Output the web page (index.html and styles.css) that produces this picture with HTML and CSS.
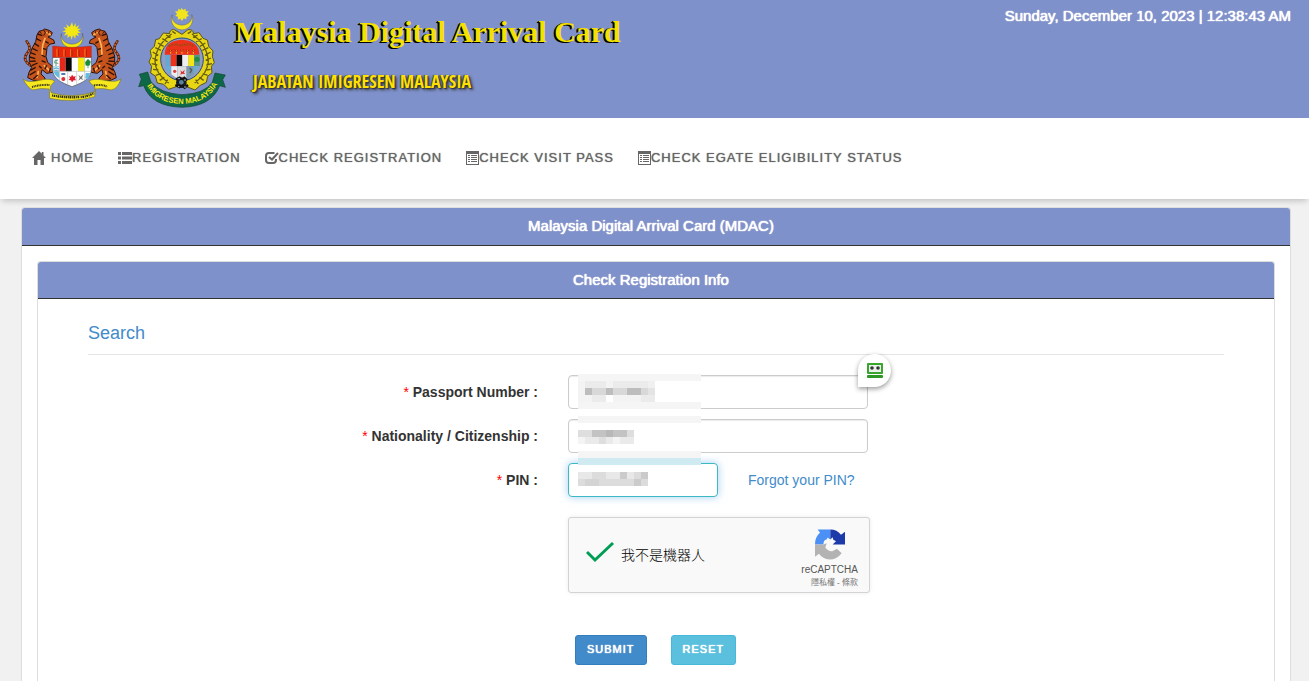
FILE: index.html
```html
<!DOCTYPE html>
<html lang="en">
<head>
<meta charset="utf-8">
<title>Malaysia Digital Arrival Card</title>
<link rel="stylesheet" href="styles.css">
</head>
<body>
<header class="banner">
  <svg class="crest" viewBox="0 0 345 354" aria-hidden="true">
    <defs>
      <g id="tiger">
        <path d="M47 197C32 188 24 174 36 160C47 150 46 137 35 124" fill="none" stroke="#5b2410" stroke-width="8" stroke-linecap="round"/>
        <path d="M47 197C32 188 24 174 36 160C47 150 46 137 35 124" fill="none" stroke="#d8672b" stroke-width="4" stroke-dasharray="6 4"/>
        <path d="M72 94L83 91L89 87L102 91L112 98L108 107L99 111L116 120L119 130L105 132L96 143L93 170L98 187L116 203L113 217L95 220L81 209L78 222L90 234L88 242L55 241L38 233L42 217L50 202L43 188L43 168L51 145L62 125L66 105Z" fill="#c6531b" stroke="#2d1208" stroke-width="3"/>
        <path d="M90 115L83 136L81 166M96 98L106 104M88 197L103 211M70 215L66 232" fill="none" stroke="#ffb45a" stroke-width="5" stroke-linecap="round"/>
        <path d="M68 102L82 107M64 116L78 123M58 130L72 139M52 145L68 153M46 158L62 164M44 171L61 176M45 184L62 183M50 197L68 189M46 211L62 202M44 225L62 214M55 237L68 225M91 124L101 130M84 146L93 148M79 165L91 171M80 182L92 187M72 198L80 205M95 196L90 208M107 203L103 215" fill="none" stroke="#2a110a" stroke-width="4"/>
        <path d="M72 94L80 101M86 90L91 98L86 107M101 94L99 101" fill="none" stroke="#3a160b" stroke-width="3"/>
      </g>
    </defs>
    <path d="M140 100A33 33 0 1 0 202 100A32 26 0 1 1 140 100Z" fill="#f4e813" stroke="#3c3d2f" stroke-width="1"/>
    <path d="M171 67L175 80L182 69L182 82L193 75L187 86L199 86L188 92L198 98L187 99L192 109L182 104L181 116L174 106L170 119L166 107L157 114L158 103L147 107L153 97L142 95L153 90L145 81L157 84L154 73L164 81Z" fill="#f4e813"/>
    <use href="#tiger"/><use href="#tiger" transform="translate(342 0) scale(-1 1)"/>
    <path d="M113 172H229V208C228 237 203 248 171 260C139 248 114 237 113 208Z" fill="#fff" stroke="#555" stroke-width="2"/>
    <path d="M113 138Q171 146 229 138V172H113Z" fill="#e8270d" stroke="#8f2210"/>
    <path d="M126 146V170M147 148V170M167 148V170M188 148V170M210 146V170" stroke="#ffb923" stroke-width="2"/>
    <path d="M130 148V168M151 150V168M171 150V168M192 150V168M214 148V168" stroke="#8e1e0c" stroke-width="2"/>
    <path d="M134 173H152V214H134Z" fill="#e8271b"/><path d="M152 173H170V214H152Z" fill="#080808"/><path d="M189 173H209V214H189Z" fill="#f5e913"/>
    <path d="M115 199H133V234Q118 228 115 211Z" fill="#65bddd"/><path d="M116 202Q124 198 132 203M116 210Q124 206 132 210" fill="none" stroke="#eaf8ff" stroke-width="3"/>
    <path d="M123 178V199M117 184L129 180M117 188L130 190" stroke="#5d9b82" stroke-width="3"/>
    <path d="M219 178L226 185L223 196H213L211 187ZM219 190V205" fill="#168c3a" stroke="#168c3a" stroke-width="2"/>
    <path d="M113 214H229M134 214V241M158 214V254M185 214V254M209 173V241" stroke="#bbb" stroke-width="2"/>
    <path d="M162 228L168 231L171 224L176 230L182 228L180 235L183 241L176 241L171 247L168 241L161 240L165 235Z" fill="#e0192a"/>
    <circle cx="145" cy="237" r="6" fill="#dc2e3a"/><path d="M139 222H151" stroke="#345aaa" stroke-width="5"/>
    <path d="M190 224L197 230L205 223L201 235L206 240L197 237L190 242L194 233Z" fill="#777"/><path d="M212 219H225L219 238L211 235Z" fill="#65bddd"/>
    <path d="M24 237Q38 250 73 241Q108 233 119 244L111 253Q103 258 108 278Q141 288 171 287Q208 286 240 275Q243 259 230 253L222 243Q237 234 269 241Q305 249 318 236Q309 267 288 270Q261 263 241 267L239 290Q169 310 104 295L103 267Q77 263 54 270Q38 264 24 237Z" fill="#f6e81d" stroke="#817b24" stroke-width="2"/>
    <path d="M51 261Q78 253 104 255M237 256Q258 252 277 260" fill="none" stroke="#34331c" stroke-width="6" stroke-dasharray="3 2"/>
    <path d="M111 286Q150 294 193 291M197 291Q221 289 237 279" fill="none" stroke="#292a1c" stroke-width="7" stroke-dasharray="3 2 5 2"/>
  </svg>
  <svg class="badge" viewBox="0 0 315 354" aria-label="Imigresen Malaysia">
    <path d="M127 44A32 32 0 1 0 185 44A30 25 0 1 1 127 44Z" fill="#f3e51d" stroke="#4b4b35"/>
    <path d="M155 23L159 30L167 26L167 34L176 34L171 41L177 48L169 50L169 58L161 55L156 63L151 56L143 59L144 50L136 48L141 42L135 34L144 34L145 26L152 30Z" fill="#f3e51d"/>
    <path d="M131 88Q118 90 119 101L100 99L88 116L77 119L73 139L61 151L64 169L57 186L65 199L62 219L76 228L82 249L101 253L116 268L139 260H170L195 270L211 256L229 247L233 229L246 218L244 199L253 188L247 169L249 153L236 139L232 120L219 115L207 98L190 101Q191 88 174 89L156 103Z" fill="#e8d615" stroke="#5c5615" stroke-width="3"/>
    <path d="M127 94L137 101M108 105L122 112M97 116L113 126M84 129L101 139M76 143L93 151M68 156L85 166M67 174L83 181M65 191L82 195M69 208L85 210M77 226L93 221M89 241L103 232M105 252L113 239M184 94L173 101M203 105L189 112M215 116L198 126M226 129L210 139M235 143L217 151M242 156L225 166M243 174L227 181M246 191L229 195M242 208L226 210M233 226L218 221M221 241L208 232M205 252L197 239M125 102Q78 135 75 184Q76 221 116 249M186 102Q232 135 235 184Q233 221 194 249" fill="none" stroke="#675d10" stroke-width="4"/>
    <circle cx="156" cy="178" r="64" fill="#8f9cc4" stroke="#294783" stroke-width="3"/>
    <path d="M104 164Q104 121 156 119Q207 122 208 164Z" fill="#ed321b"/>
    <path d="M116 139Q134 129 152 138Q171 128 193 139" fill="none" stroke="#a74714" stroke-width="7" stroke-dasharray="5 3"/>
    <path d="M122 150V161M139 150V161M156 150V161M173 150V161M190 150V161" stroke="#ffc425" stroke-width="3"/>
    <path d="M118 149L122 155L126 149M135 149L139 155L143 149M152 149L156 155L160 149M169 149L173 155L177 149M186 149L190 155L194 149" fill="none" stroke="#72230e" stroke-width="2"/>
    <path d="M105 165H122V198H107Z" fill="#64a8d1"/><path d="M122 165H140V198H122Z" fill="#ed321b"/><path d="M140 165H157V198H140Z" fill="#090909"/><path d="M157 165H175V198H157Z" fill="#eee"/><path d="M175 165H192V198H175Z" fill="#f5e512"/><path d="M192 165H210V198H192Z" fill="#579784"/>
    <circle cx="201" cy="178" r="8" fill="#248b47"/>
    <path d="M107 199H123V223Q110 214 107 199Z" fill="#65aed8"/><path d="M124 199H141V235L124 223Z" fill="#eee"/><path d="M142 199H169V240H142Z" fill="#ddd"/><path d="M170 199H191V223L170 237Z" fill="#779aae"/><path d="M191 199H205Q201 212 191 221Z" fill="#64afd1"/>
    <path d="M151 211L157 216L164 209L162 218L166 222L157 221L151 224L153 217Z" fill="#d92e32"/><circle cx="134" cy="214" r="5" fill="#d84343"/><path d="M179 204L185 210L180 219" stroke="#555" stroke-width="4" fill="none"/>
    <circle cx="154" cy="248" r="16" fill="#161d25"/><path d="M138 238L149 233L155 239L163 233L171 241M136 255L148 261L154 253L164 263L174 255" fill="none" stroke="#111" stroke-width="7"/><circle cx="154" cy="247" r="7" fill="#5b819b"/><path d="M143 236H150M162 240H168M144 260H148M162 261H169" stroke="#a4b7c0" stroke-width="3"/>
    <path d="M53 216L28 223L34 237L26 260L41 257Q64 319 156 322Q245 319 269 257L286 262L278 239L286 225L255 219L247 247Q222 282 156 284Q90 281 62 244Z" fill="#0d6848" stroke="#174231" stroke-width="2"/>
    <path id="ribbon" d="M44 241Q70 309 156 312Q243 309 269 236" fill="none"/>
    <text class="ribbon-text"><textPath href="#ribbon" startOffset="50%" text-anchor="middle">IMIGRESEN MALAYSIA</textPath></text>
  </svg>
  <div class="titles">
    <h1 class="title">Malaysia Digital Arrival Card</h1>
    <p class="subtitle">JABATAN IMIGRESEN MALAYSIA</p>
  </div>
  <time class="clock">Sunday, December 10, 2023 | 12:38:43 AM</time>
</header>
<nav class="menu">
  <a href="#" class="home"><svg class="icon" viewBox="0 0 14 14"><path d="M7 0L0 7H2V14H5.500V9H8.500V14H12V7H14L11.500 4.500V1H9.800V2.800Z"/></svg>HOME</a>
  <a href="#"><svg class="icon" viewBox="0 0 14 14"><path d="M0 1H3V4H0ZM4 1H14V4H4ZM0 5.500H3V8.500H0ZM4 5.500H14V8.500H4ZM0 10H3V13H0ZM4 10H14V13H4Z"/></svg>REGISTRATION</a>
  <a href="#"><svg class="icon" viewBox="0 0 14 14"><path d="M9.500 2H4Q1 2 1 5V9Q1 12 4 12H8Q11 12 11 9V8" fill="none" stroke="#666" stroke-width="2"/><path d="M4 6L7 8.500L13 2" fill="none" stroke="#666" stroke-width="2"/></svg>CHECK REGISTRATION</a>
  <a href="#"><svg class="icon sheet" viewBox="0 0 13 14"><path fill-rule="evenodd" d="M0 0H13V14H0ZM1 3V13H12V3ZM2 4H4V5H2ZM5 4H11V5H5ZM2 6H4V7H2ZM5 6H11V7H5ZM2 8H4V9H2ZM5 8H11V9H5ZM2 10H4V11H2ZM5 10H11V11H5Z"/></svg>CHECK VISIT PASS</a>
  <a href="#"><svg class="icon sheet" viewBox="0 0 13 14"><path fill-rule="evenodd" d="M0 0H13V14H0ZM1 3V13H12V3ZM2 4H4V5H2ZM5 4H11V5H5ZM2 6H4V7H2ZM5 6H11V7H5ZM2 8H4V9H2ZM5 8H11V9H5ZM2 10H4V11H2ZM5 10H11V11H5Z"/></svg>CHECK EGATE ELIGIBILITY STATUS</a>
</nav>
<main class="panel outer">
  <h2 class="panel-heading main-heading">Malaysia Digital Arrival Card (MDAC)</h2>
  <section class="panel inner">
    <h2 class="panel-heading">Check Registration Info</h2>
    <h3 class="legend">Search</h3>
    <form class="form">
      <label class="label" for="passport"><span class="star">*</span> Passport Number :</label>
      <div class="field first">
        <input class="input" id="passport" type="text">
        <button class="filler" type="button" aria-label="Fill form"><svg viewBox="0 0 16 16" width="16" height="16"><rect width="16" height="11" rx="1" fill="#38a52c"/><rect x="2" y="2" width="12" height="7" fill="#eaf0ea"/><circle cx="5" cy="5" r="1.800" fill="#333"/><circle cx="11" cy="5" r="1.800" fill="#333"/><rect y="12" width="16" height="3" rx="1" fill="#2c9824"/></svg></button>
        <svg class="mosaic" viewBox="0 0 123 112" shape-rendering="crispEdges" aria-hidden="true">
          <path fill="#f5f5f5" d="M0 0H123V7H0ZM0 28H123V35H0ZM0 42H123V49H0ZM0 77H123V84H0Z"/><path fill="#cfeaf0" d="M0 84H123V91H0Z"/>
          <path fill="#f3f3f3" d="M0 7h7v14h-7zM28 7h7v7h-7zM0 21h14v7h-14zM35 21h28v7h-28z"/>
          <path fill="#ebebeb" d="M7 7h21v7h-21zM35 7h35v7h-35zM14 21h14v7h-14zM63 21h14v7h-14z"/><path fill="#f0f0f0" d="M70 7h7v7h-7z"/>
          <path fill="#bdbdbd" d="M7 14h7v7h-7zM28 14h7v7h-7zM49 14h14v7h-14z"/><path fill="#d8d8d8" d="M14 14h14v7h-14zM35 14h14v7h-14zM63 14h7v7h-7z"/><path fill="#e4e4e4" d="M70 14h7v7h-7z"/>
          <path fill="#dedede" d="M0 56h14v7h-14zM49 56h7v7h-7zM21 63h7v7h-7z"/><path fill="#c3c3c3" d="M14 56h35v7h-35z"/><path fill="#b8b8b8" d="M28 56h7v7h-7z"/><path fill="#f4f4f4" d="M0 63h7v7h-7zM35 63h7v7h-7z"/><path fill="#eaeaea" d="M7 63h14v7h-14zM28 63h7v7h-7zM42 63h14v7h-14z"/>
          <path fill="#e8e8e8" d="M0 98h14v7h-14zM28 98h14v7h-14zM49 98h7v7h-7z"/><path fill="#dcdcdc" d="M14 98h14v7h-14zM56 98h7v7h-7zM0 105h7v7h-7zM21 105h35v7h-35zM63 105h7v7h-7z"/><path fill="#cbcbcb" d="M42 98h7v7h-7zM63 98h7v7h-7zM56 105h7v7h-7z"/><path fill="#d4d4d4" d="M7 105h14v7h-14z"/>
        </svg>
      </div>
      <label class="label" for="nation"><span class="star">*</span> Nationality / Citizenship :</label>
      <div class="field"><input class="input" id="nation" type="text"></div>
      <label class="label" for="pin"><span class="star">*</span> PIN :</label>
      <div class="field pin-row"><input class="input pin" id="pin" type="text"><a href="#" class="forgot">Forgot your PIN?</a></div>
      <div class="field actions">
        <div class="captcha">
          <svg class="tick" viewBox="0 0 28 22"><path d="M1 11L9 19L27 2" fill="none" stroke="#009e55" stroke-width="3"/></svg>
          <span class="robot">我不是機器人</span>
          <div class="brand">
            <svg class="recaptcha" viewBox="0 0 90 92">
              <path d="M0 46C0 31 5 19 15 11L8 1H46V31L38 25L35 31Q26 31 25 46Z" fill="#4a90f5"/>
              <path d="M46 1Q66 1 78 17L90 8V46H53L63 36L55 32L53 24L46 31Z" fill="#1c3aa9"/>
              <path d="M0 46H25L35 42L31 55Q39 67 52 66L66 59L80 72Q65 91 44 91Q23 90 12 74L0 83Z" fill="#b3b3b3"/>
            </svg>
            <span class="brand-name">reCAPTCHA</span>
            <span class="terms"><a href="#">隱私權</a> - <a href="#">條款</a></span>
          </div>
        </div>
        <div class="buttons"><button class="btn submit" type="submit">SUBMIT</button><button class="btn reset" type="reset">RESET</button></div>
      </div>
    </form>
  </section>
</main>
</body>
</html>
```
FILE: styles.css
```css
* { box-sizing: border-box; }
body {
  margin: 0;
  min-height: 100vh;
  display: flex;
  flex-direction: column;
  background: #f1f1f1;
  font: 14px/20px "Liberation Sans", Arial, "Noto Sans CJK TC", sans-serif;
  color: #333;
}
a { color: #428bca; text-decoration: none; }
h1, h2, h3, p { margin: 0; }
.banner {
  display: flex;
  align-items: flex-start;
  min-height: 118px;
  padding: 0 18px 0 15px;
  background: #7f91ca;
}
.crest { width: 115px; height: 118px; flex: none; }
.badge { width: 105px; height: 118px; flex: none; }
.ribbon-text { font: bold 23px "Liberation Sans Narrow", "Liberation Sans", sans-serif; fill: #f7e90d; }
.titles { padding: 12px 0 0; }
.title {
  font: bold 30px/40px "Liberation Serif", serif;
  color: #f5e000;
  text-shadow: -1px 0 #000, -2px 1px #000;
}
.subtitle {
  padding: 16px 0 0 18px;
  font: bold 18px/26px "Open Sans Condensed", "Roboto Condensed", "Liberation Sans Narrow", "Liberation Sans", sans-serif;
  color: #ffe000;
  text-shadow: 1px 1px 1px #333, 2px 2px 3px #333, -1px 0 1px #444;
}
.clock {
  margin-left: auto;
  padding-top: 6px;
  font-size: 15px;
  color: #fff;
  text-shadow: 0 0 1px #fff, 0 0 1px #fff;
}
.menu {
  display: flex;
  flex-wrap: wrap;
  align-items: center;
  gap: 24px;
  min-height: 81px;
  padding: 0 32px 2px;
  background: #fff;
  box-shadow: 0 4px 6px -2px rgba(0, 0, 0, .2);
}
.menu a {
  display: flex;
  align-items: center;
  font-size: 13px;
  letter-spacing: 1px;
  color: #666;
  text-shadow: 0 0 1px #666;
}
.icon { width: 14px; height: 14px; fill: #666; }
.sheet { width: 13px; }
.menu .home { gap: 5px; }
.panel { border: 1px solid #ddd; border-bottom: 0; border-radius: 4px 4px 0 0; background: #fff; }
.outer { display: flex; flex-direction: column; flex: 1; margin: 8px 18px 0 21px; }
.inner { flex: 1; margin: 15px 15px 0; }
.panel-heading {
  padding: 8px 10px 8px 0;
  border-bottom: 1px solid #333;
  border-radius: 3px 3px 0 0;
  background: #7f91ca;
  color: #fff;
  font-size: 15px;
  font-weight: normal;
  line-height: 20px;
  text-align: center;
  text-shadow: 0 0 1px #fff, 0 0 1px #fff;
}
.main-heading { padding-bottom: 9px; }
.legend {
  margin: 0 50px 20px;
  padding: 22px 0 9px;
  border-bottom: 1px solid #e5e5e5;
  font-size: 18px;
  font-weight: normal;
  line-height: 24px;
  color: #428bca;
}
.form { display: grid; grid-template-columns: 5fr 7fr; row-gap: 10px; }
.label { padding: 7px 15px 7px 0; text-align: right; font-weight: bold; }
.star { color: red; font-weight: normal; }
.field { padding-left: 15px; }
.first { position: relative; }
.input {
  display: block;
  width: 300px;
  height: 34px;
  padding: 6px 12px;
  border: 1px solid #ccc;
  border-radius: 4px;
  background: #fff;
  font: inherit;
  box-shadow: inset 0 1px 1px rgba(0, 0, 0, .08);
}
.pin { width: 150px; border-color: #3bb9c4; box-shadow: 0 0 8px rgba(102, 175, 233, .6); }
.pin-row { display: flex; align-items: center; gap: 30px; }
.mosaic { position: absolute; z-index: 1; left: 25px; top: -1px; width: 123px; height: 112px; pointer-events: none; }
.filler {
  position: absolute;
  left: 305px;
  top: -21px;
  display: grid;
  place-items: center;
  width: 33px;
  height: 33px;
  padding: 0;
  border: 0;
  border-radius: 50% 50% 50% 0;
  background: #fff;
  box-shadow: 0 2px 5px rgba(0, 0, 0, .4);
}
.actions { grid-column: 2; padding-top: 10px; }
.captcha {
  display: flex;
  align-items: center;
  width: 302px;
  height: 76px;
  padding: 0 11px 0 17px;
  border: 1px solid #d3d3d3;
  border-radius: 3px;
  background: #f9f9f9;
  box-shadow: 0 0 4px rgba(0, 0, 0, .08);
  color: #000;
}
.tick { width: 28px; height: 22px; margin: 0 7px 6px 0; }
.robot { font-weight: 300; }
.brand { display: flex; flex-direction: column; align-items: flex-end; margin-left: auto; padding-top: 8px; color: #555; }
.recaptcha { width: 30px; height: 31px; margin-right: 13px; }
.brand-name { margin-top: 3px; font-size: 10px; line-height: 14px; }
.terms { font-size: 8px; line-height: 12px; }
.terms a { color: #777; }
.buttons { display: flex; gap: 24px; padding: 42px 0 16px 7px; }
.btn {
  height: 30px;
  padding: 0 11px 2px;
  border: 1px solid #357ebd;
  border-radius: 3px;
  background: #428bca;
  color: #fff;
  font: 11px/18px "Liberation Sans", Arial, sans-serif;
  letter-spacing: 1px;
  text-shadow: 0 0 1px #fff, 0 0 1px #fff;
}
.reset { border-color: #46b8da; background: #5bc0de; }
```
